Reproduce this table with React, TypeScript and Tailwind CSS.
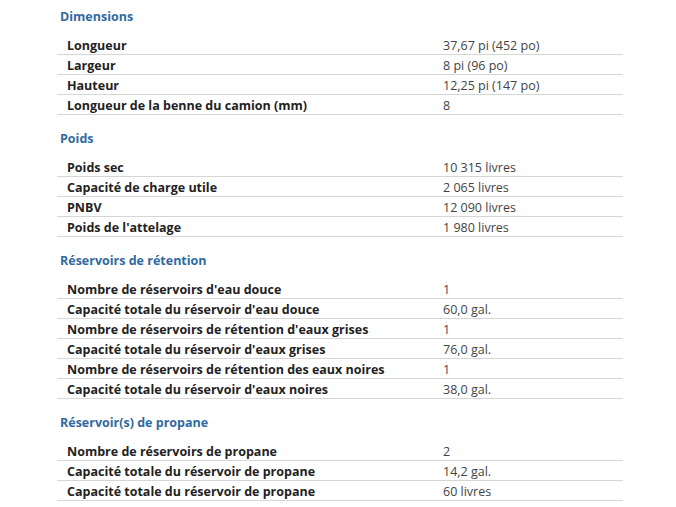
import React from "react";

type Section = { title: string; rows: [string, string][] };

const sections: Section[] = [
  {
    title: "Dimensions",
    rows: [
      ["Longueur", "37,67 pi (452 po)"],
      ["Largeur", "8 pi (96 po)"],
      ["Hauteur", "12,25 pi (147 po)"],
      ["Longueur de la benne du camion (mm)", "8"],
    ],
  },
  {
    title: "Poids",
    rows: [
      ["Poids sec", "10 315 livres"],
      ["Capacité de charge utile", "2 065 livres"],
      ["PNBV", "12 090 livres"],
      ["Poids de l'attelage", "1 980 livres"],
    ],
  },
  {
    title: "Réservoirs de rétention",
    rows: [
      ["Nombre de réservoirs d'eau douce", "1"],
      ["Capacité totale du réservoir d'eau douce", "60,0 gal."],
      ["Nombre de réservoirs de rétention d'eaux grises", "1"],
      ["Capacité totale du réservoir d'eaux grises", "76,0 gal."],
      ["Nombre de réservoirs de rétention des eaux noires", "1"],
      ["Capacité totale du réservoir d'eaux noires", "38,0 gal."],
    ],
  },
  {
    title: "Réservoir(s) de propane",
    rows: [
      ["Nombre de réservoirs de propane", "2"],
      ["Capacité totale du réservoir de propane", "14,2 gal."],
      ["Capacité totale du réservoir de propane", "60 livres"],
    ],
  },
];

export default function App() {
  return (
    <div
      className="w-[676px] h-[507px] bg-white pt-[6px] pl-[57px] overflow-hidden"
      style={{ fontFamily: '"Open Sans", "Noto Sans", sans-serif' }}
    >
      <div className="w-[566px]">
        {sections.map((s, i) => (
          <div key={s.title} className={i === 0 ? "" : "mt-[13px]"}>
            <div className="h-5 leading-5 pt-[1px] pl-[3px] text-[12.5px] font-bold text-[#2f6aa0]">
              {s.title}
            </div>
            <div className="mt-[9px]">
              {s.rows.map(([k, v], j) => (
                <div
                  key={j}
                  className="flex h-5 pt-[1px] border-b border-[#d6d6d6] text-[12.5px] leading-[19px]"
                >
                  <div className="w-[386px] pl-[10px] font-bold text-[#222]">{k}</div>
                  <div className="flex-1 text-[#444]">{v}</div>
                </div>
              ))}
            </div>
          </div>
        ))}
      </div>
    </div>
  );
}
